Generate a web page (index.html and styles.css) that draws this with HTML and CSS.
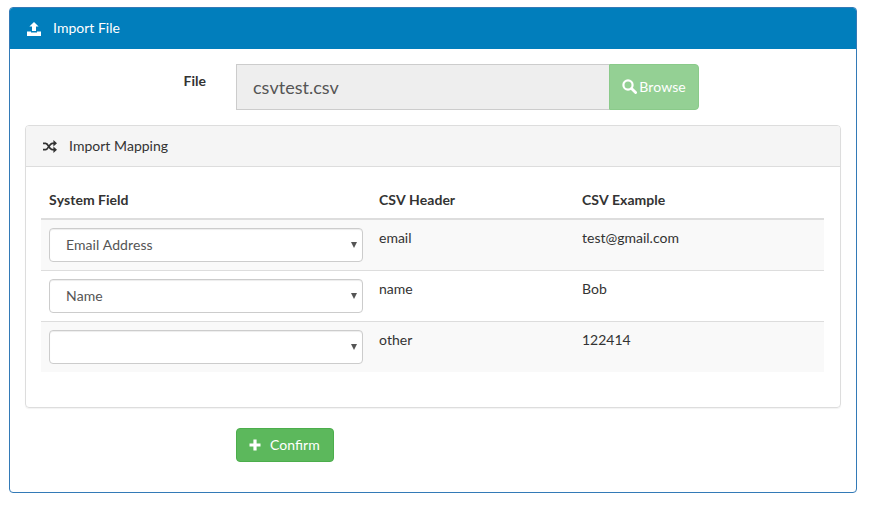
FILE: index.html
```html
<!DOCTYPE html>
<html lang="en">
<head>
<meta charset="utf-8">
<title>Import File</title>
<link rel="stylesheet" href="styles.css">
</head>
<body>
<section class="panel">
  <header class="panel-head">
    <svg class="icon-upload" viewBox="0 0 14 14" width="14" height="14" aria-hidden="true"><path d="M7 0 L11.6 4.6 H9 V9 H5 V4.6 H2.4 Z"/><path d="M0 9.6 H4 V10.6 H10 V9.6 H14 V14 H0 Z"/></svg>
    <span class="head-title">Import File</span>
  </header>
  <div class="panel-body">
    <div class="file-row">
      <label class="file-label" for="file">File</label>
      <div class="file-group">
        <input class="file-input" id="file" type="text" value="csvtest.csv" readonly>
        <button class="browse" type="button">
          <svg viewBox="0 0 15 15" width="15" height="15" aria-hidden="true"><circle cx="6" cy="6" r="4.6" fill="none" stroke="#fff" stroke-width="2.2"/><path d="M9.5 9.5 L13.6 13.6" stroke="#fff" stroke-width="2.8" stroke-linecap="round"/></svg>
          <span>Browse</span>
        </button>
      </div>
    </div>
    <section class="mapping">
      <header class="mapping-head">
        <svg class="icon-shuffle" viewBox="0 0 14 13" width="14" height="13" aria-hidden="true"><path d="M0 3.3 H2.6 C5.4 3.3 6.2 9.7 9.4 9.7 H11" fill="none" stroke="#333" stroke-width="1.8"/><path d="M0 9.7 H2.6 C5.4 9.7 6.2 3.3 9.4 3.3 H11" fill="none" stroke="#333" stroke-width="1.8"/><path d="M10.4 0 L14 3.3 L10.4 6.4 Z M10.4 6.6 L14 9.7 L10.4 13 Z" fill="#333"/></svg>
        <span>Import Mapping</span>
      </header>
      <div class="mapping-body">
        <table class="map-table">
          <thead>
            <tr><th class="col-a">System Field</th><th class="col-b">CSV Header</th><th>CSV Example</th></tr>
          </thead>
          <tbody>
            <tr>
              <td><div class="select-wrap"><select class="field"><option>Email Address</option></select></div></td>
              <td>email</td><td>test@gmail.com</td>
            </tr>
            <tr>
              <td><div class="select-wrap"><select class="field"><option>Name</option></select></div></td>
              <td>name</td><td>Bob</td>
            </tr>
            <tr>
              <td><div class="select-wrap"><select class="field"><option></option></select></div></td>
              <td>other</td><td>122414</td>
            </tr>
          </tbody>
        </table>
      </div>
    </section>
    <div class="actions">
      <button class="confirm" type="button">
        <svg viewBox="0 0 12 12" width="12" height="12" aria-hidden="true"><path d="M4.4 0.5 H7.6 V4.4 H11.5 V7.6 H7.6 V11.5 H4.4 V7.6 H0.5 V4.4 H4.4 Z" fill="#fff"/></svg>
        <span>Confirm</span>
      </button>
    </div>
  </div>
</section>
</body>
</html>
```
FILE: styles.css
```css
* { box-sizing: border-box; }
html, body { margin: 0; background: #fff; }
body {
  padding: 7px 16px 18px 9px;
  font-family: Lato, "Liberation Sans", sans-serif;
  font-size: 14px;
  line-height: 20px;
  color: #333;
  font-kerning: none;
}
.panel {
  border: 1px solid #337ab7;
  border-radius: 4px;
  overflow: hidden;
  background: #fff;
}
.panel-head {
  display: flex;
  align-items: center;
  gap: 12px;
  height: 41px;
  margin: 0 -1px;
  padding: 0 18px;
  background: #017ebc;
  color: #fff;
}
.head-title { margin-top: -2px; }
.icon-upload { fill: #fff; }
.panel-body { padding: 15px; }
.file-row { display: flex; align-items: flex-start; gap: 30px; margin-bottom: 15px; }
.file-label { width: 181px; padding-top: 7px; text-align: right; font-weight: 700; }
.file-group { display: flex; width: 463px; height: 46px; }
.file-input {
  flex: 1;
  min-width: 0;
  height: 46px;
  padding: 10px 16px;
  border: 1px solid #ccc;
  border-right: 0;
  border-radius: 0;
  background: #eee;
  color: #555;
  font: 18px/24px Lato, "Liberation Sans", sans-serif;
  font-kerning: none;
  outline: none;
}
.browse {
  display: flex;
  align-items: center;
  justify-content: center;
  gap: 2px;
  width: 90px;
  height: 46px;
  padding: 0 0 1px;
  border: 1px solid #4cae4c;
  border-radius: 0 4px 4px 0;
  background: #5cb85c;
  opacity: .65;
  color: #fff;
  font: 14px/20px Lato, "Liberation Sans", sans-serif;
  font-kerning: none;
}
.mapping {
  border: 1px solid #ddd;
  border-radius: 4px;
  box-shadow: 0 1px 1px rgba(0,0,0,.05);
  overflow: hidden;
}
.mapping-head {
  display: flex;
  align-items: center;
  gap: 12px;
  height: 41px;
  padding: 0 17px;
  background: #f5f5f5;
  border-bottom: 1px solid #ddd;
}
.mapping-body { padding: 15px 16px 15px 15px; }
.map-table { width: 100%; border-collapse: separate; border-spacing: 0; margin-bottom: 20px; table-layout: fixed; }
.map-table th {
  height: 38px;
  padding: 8px;
  text-align: left;
  font-weight: 700;
  line-height: 20px;
  border-bottom: 2px solid #ddd;
}
.col-a { width: 330px; }
.col-b { width: 203px; }
.map-table td { height: 51px; padding: 8px; vertical-align: top; border-top: 1px solid #ddd; }
.map-table tbody tr:first-child td { height: 50px; border-top: 0; }
.map-table tbody tr:nth-child(odd) { background: #f9f9f9; }
.select-wrap { position: relative; }
.select-wrap::after {
  content: "";
  position: absolute;
  top: 14px;
  right: 6px;
  border-style: solid;
  border-width: 6px 3.5px 0;
  border-color: #555 transparent transparent;
  pointer-events: none;
}
.field {
  display: block;
  width: 100%;
  height: 34px;
  padding: 6px 12px 6px 16px;
  border: 1px solid #ccc;
  border-radius: 4px;
  background-color: #fff;
  color: #555;
  font: 14px/20px Lato, "Liberation Sans", sans-serif;
  font-kerning: none;
  box-shadow: inset 0 1px 1px rgba(0,0,0,.075);
  appearance: none;
}
.actions { margin: 20px 0 15px 211px; }
.confirm {
  display: flex;
  align-items: center;
  gap: 9px;
  height: 34px;
  padding: 0 13px 0 12px;
  border: 1px solid #4cae4c;
  border-radius: 4px;
  background: #5cb85c;
  color: #fff;
  font: 14px/20px Lato, "Liberation Sans", sans-serif;
  font-kerning: none;
}
```
